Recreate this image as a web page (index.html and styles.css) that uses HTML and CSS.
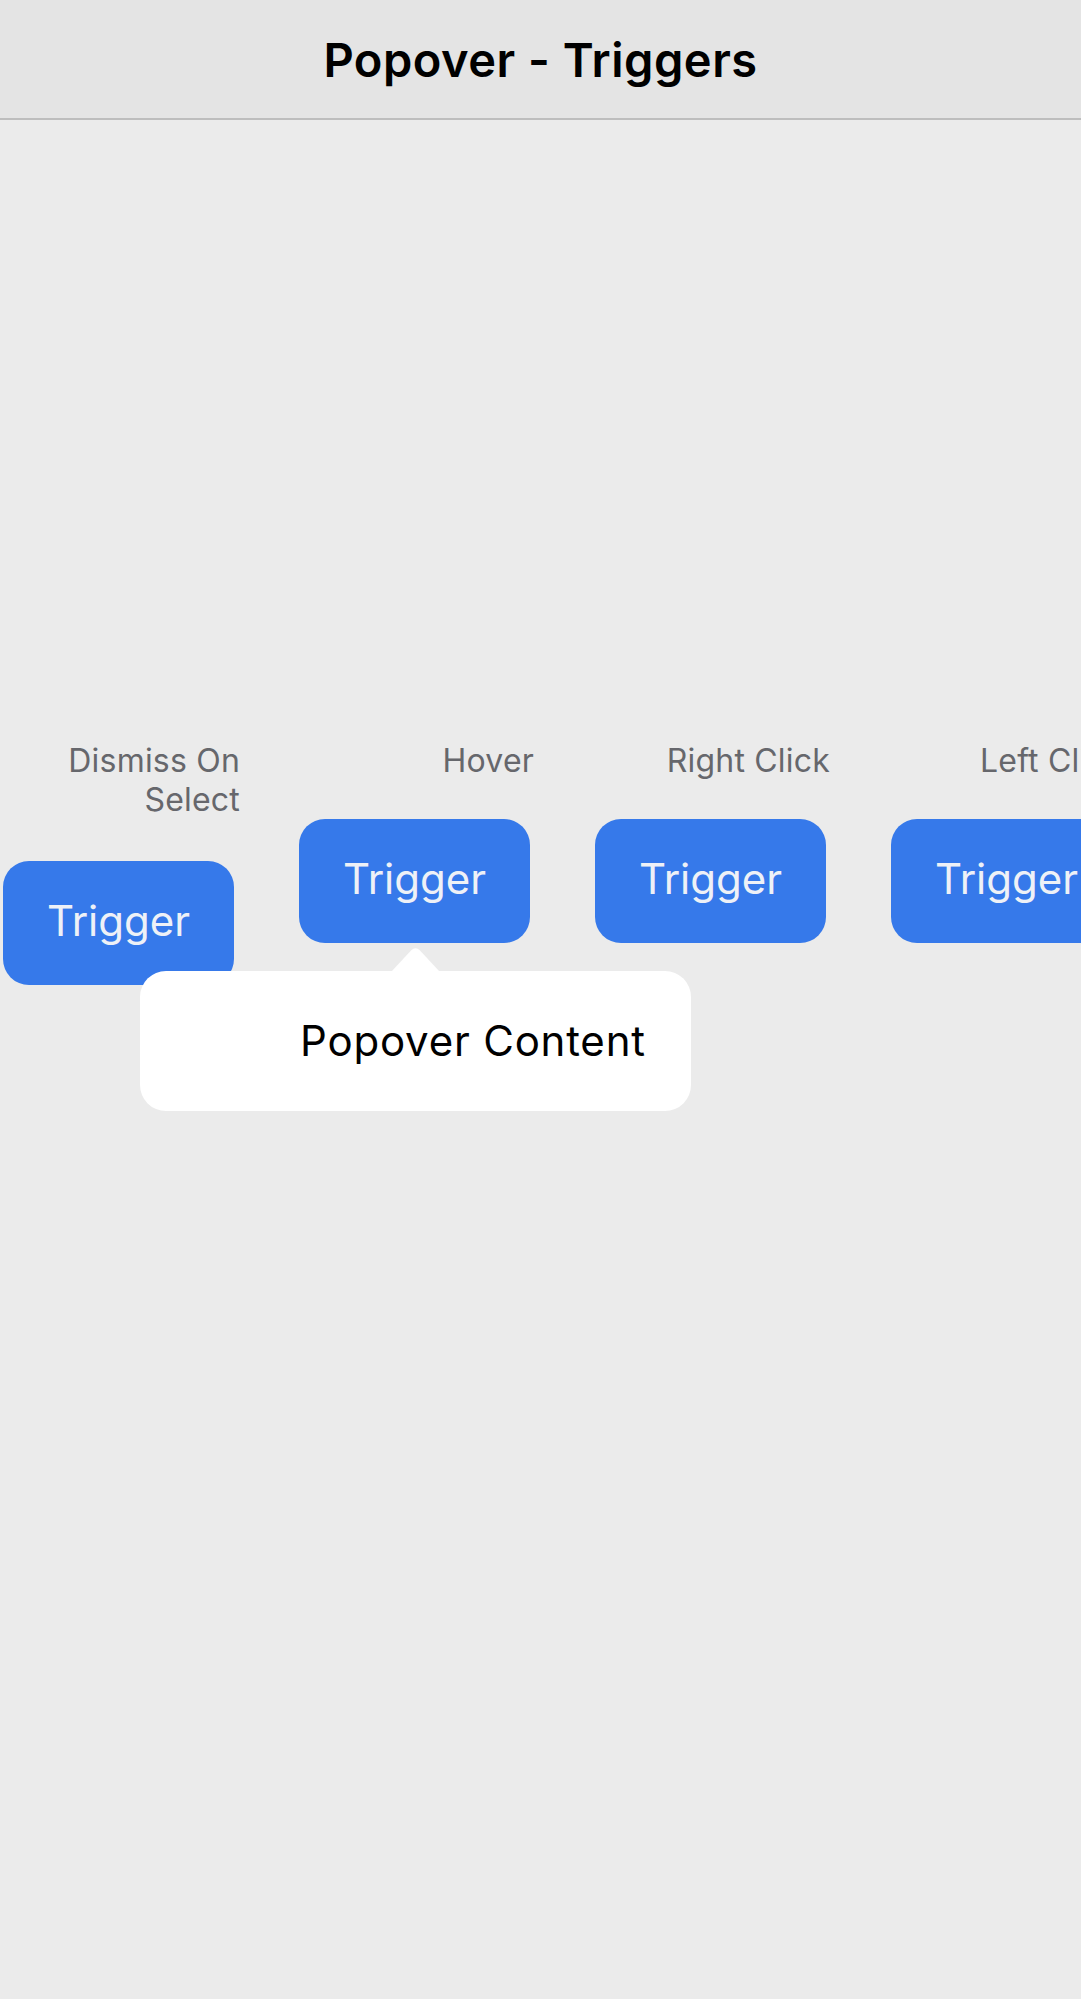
FILE: index.html
```html
<!DOCTYPE html>
<html>
<head>
<meta charset="utf-8">
<link rel="stylesheet" href="styles.css">
</head>
<body>
<div class="screen">
  <header class="navbar"><h1 class="title">Popover - Triggers</h1></header>
  <main class="content">
    <div class="row">
      <div class="col">
        <div class="label label-two-line">Dismiss On<br>Select</div>
        <button class="trigger">Trigger</button>
      </div>
      <div class="col">
        <div class="label">Hover</div>
        <button class="trigger">Trigger</button>
      </div>
      <div class="col">
        <div class="label">Right Click</div>
        <button class="trigger">Trigger</button>
      </div>
      <div class="col">
        <div class="label label-left">Left Click</div>
        <button class="trigger">Trigger</button>
      </div>
    </div>
    <svg class="arrow" width="49" height="25" viewBox="0 0 49 25"><path d="M0 25 L20 3.5 Q24.5 -1 29 3.5 L49 25 Z" fill="#ffffff"/></svg>
    <div class="popover"><span class="popover-text">Popover Content</span></div>
  </main>
</div>
</body>
</html>
```
FILE: styles.css
```css
html, body {
  margin: 0;
  padding: 0;
}
body {
  width: 1081px;
  height: 1999px;
  overflow: hidden;
  background: #ebebeb;
  font-family: Inter, "Noto Sans", "Liberation Sans", sans-serif;
}
.screen {
  width: 1081px;
  height: 1999px;
  position: relative;
  overflow: hidden;
}
.navbar {
  height: 118px;
  background: #e4e4e4;
  border-bottom: 2px solid #bdbdbd;
  display: flex;
  align-items: center;
  justify-content: center;
}
.title {
  margin: 0;
  font-size: 47px;
  font-weight: 600;
  color: #000;
  letter-spacing: 0.5px;
}
.content {
  padding-top: 621px;
}
.row {
  display: flex;
  align-items: flex-start;
  gap: 59px;
  padding-left: 1px;
}
.col {
  flex: 0 0 237px;
  width: 237px;
  display: flex;
  flex-direction: column;
}
.label {
  font-size: 32px;
  line-height: 39px;
  color: #66676c;
  text-align: right;
  letter-spacing: 0.2px;
  margin-bottom: 39px;
}
.label-two-line {
  margin-bottom: 42px;
  margin-right: -2px;
}
.label-left {
  white-space: nowrap;
  text-align: left;
  padding-left: 91px;
}
.trigger {
  width: 231px;
  height: 124px;
  margin-left: 2px;
  border: none;
  border-radius: 26px;
  background: #3679ea;
  color: #eef1f7;
  font-family: Inter, "Noto Sans", "Liberation Sans", sans-serif;
  font-size: 42px;
  padding: 0 0 6px 0;
  cursor: pointer;
}
.arrow {
  position: absolute;
  left: 391px;
  top: 947px;
}
.popover {
  position: absolute;
  left: 140px;
  top: 971px;
  width: 551px;
  height: 140px;
  background: #ffffff;
  border-radius: 26px;
  display: flex;
  align-items: center;
  box-sizing: border-box;
  padding-left: 160px;
  padding-bottom: 2px;
}
.popover-text {
  font-size: 42px;
  color: #000;
  letter-spacing: 0.8px;
}
```
